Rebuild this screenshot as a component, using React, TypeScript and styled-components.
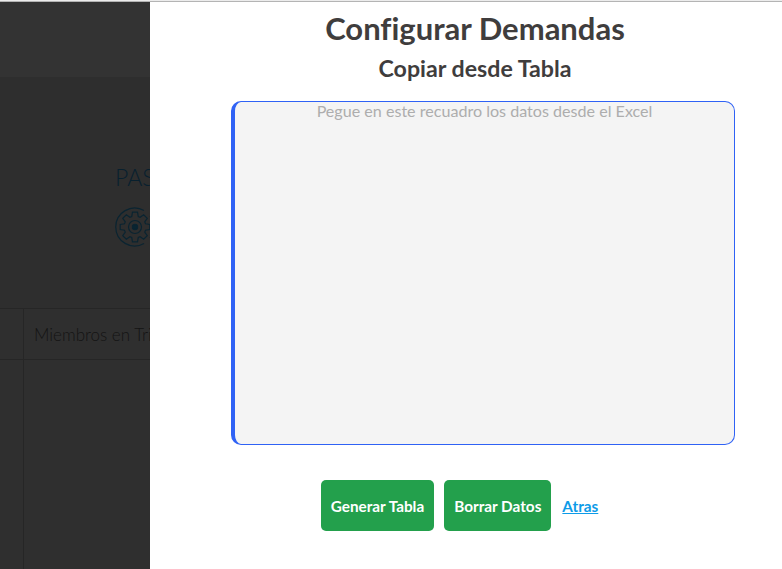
import React from "react";
import styled, { createGlobalStyle } from "styled-components";

const Global = createGlobalStyle`
  html, body { margin: 0; padding: 0; height: 100%; overflow: hidden; background: #2e2e2e; }
  body { font-family: "Lato", "Open Sans", sans-serif; font-variant-ligatures: none; }
  * { box-sizing: border-box; }
`;

const Page = styled.div`
  height: 569px;
  width: 782px;
  overflow: hidden;
  background: #2e2e2e;
`;

const TopLine = styled.div`
  height: 2px;
  background: #b4b4b4;
  border-top: 1px solid #ececec;
`;

const TopBand = styled.div`
  height: 75px;
  background: #333333;
`;

const StepArea = styled.div`
  height: 231px;
  padding: 87px 0 0 115px;
`;

const StepTitle = styled.div`
  font-size: 23px;
  font-weight: 300;
  line-height: 26px;
  color: #08202e;
`;

const StepIcon = styled.svg`
  display: block;
  margin-top: 17px;
  width: 40px;
  height: 40px;
`;

const Table = styled.div`
  display: grid;
  grid-template-columns: 23px 1fr;
  grid-template-rows: 51px 1fr;
  height: 261px;
  background: #2f2f2f;
  border-top: 1px solid #262626;
`;

const Cell = styled.div<{ $left?: boolean }>`
  display: flex;
  align-items: center;
  padding-left: 10px;
  font-size: 17px;
  font-weight: 300;
  color: #141414;
  white-space: nowrap;
  border-bottom: 1px solid #262626;
  border-left: ${(p) => (p.$left ? "1px solid #262626" : "none")};
`;

const BodyCell = styled.div<{ $left?: boolean }>`
  border-left: ${(p) => (p.$left ? "1px solid #262626" : "none")};
`;

const Modal = styled.div`
  position: fixed;
  top: 2px;
  left: 150px;
  right: 0;
  bottom: 0;
  padding-left: 18px;
  background: #ffffff;
  color: #3f3d3d;
  display: flex;
  flex-direction: column;
  align-items: center;
`;

const Title = styled.h1`
  margin: 6px 0 0;
  font-size: 31px;
  line-height: 40px;
  font-weight: 700;
  text-align: center;
`;

const Subtitle = styled.h2`
  margin: 5px 0 0;
  font-size: 23.2px;
  line-height: 30px;
  font-weight: 700;
  text-align: center;
`;

const PasteBox = styled.textarea`
  display: block;
  width: 504px;
  height: 344px;
  margin: 18px 0 0 16px;
  padding: 0;
  resize: none;
  outline: none;
  background: #f4f4f4;
  border: 1px solid #2f62f5;
  border-left: 4px solid #2f62f5;
  border-radius: 10px;
  font-family: inherit;
  font-size: 16.1px;
  line-height: 18px;
  text-align: center;
  &::placeholder { color: #adadad; opacity: 1; }
`;

const Actions = styled.div`
  display: flex;
  align-items: center;
  gap: 10px;
  margin-top: 35px;
  margin-left: -31px;
`;

const Button = styled.button`
  height: 51px;
  padding: 0 10px;
  border: none;
  border-radius: 5px;
  background: #23a04c;
  color: #ffffff;
  font-family: inherit;
  font-size: 15.3px;
  font-weight: 700;
`;

const BackLink = styled.a`
  margin-left: 1px;
  color: #0d9be8;
  font-size: 15.3px;
  font-weight: 700;
  text-decoration: underline;
`;

// cog outline, 8 teeth
const gearPath = () => {
  const cx = 20;
  const cy = 20;
  const pts: string[] = [];
  for (let i = 0; i < 8; i++) {
    const a = (i * Math.PI) / 4;
    const add = (r: number, off: number) => {
      const t = a + off;
      pts.push(`${(cx + r * Math.cos(t)).toFixed(2)} ${(cy + r * Math.sin(t)).toFixed(2)}`);
    };
    add(11, -0.3);
    add(15, -0.17);
    add(15, 0.17);
    add(11, 0.3);
  }
  return "M" + pts.join("L") + "Z";
};

const GearIcon = () => (
  <StepIcon viewBox="0 0 40 40" fill="none" stroke="#0a2431" strokeWidth="1.2">
    <path d="M29 3.4A19 19 0 1 0 29 36.6" />
    <path d="M35 9A19 19 0 0 1 35 31" />
    <path d={gearPath()} />
    <circle cx="20" cy="20" r="6.5" />
    <circle cx="20" cy="20" r="2.6" fill="#0a2431" />
  </StepIcon>
);

export default function App() {
  return (
    <>
      <Global />
      <Page>
        <TopLine />
        <TopBand />
        <StepArea>
          <StepTitle>PASO</StepTitle>
          <GearIcon />
        </StepArea>
        <Table>
          <Cell />
          <Cell $left>Miembros en Tribunal</Cell>
          <BodyCell />
          <BodyCell $left />
        </Table>
      </Page>
      <Modal>
        <Title>Configurar Demandas</Title>
        <Subtitle>Copiar desde Tabla</Subtitle>
        <PasteBox placeholder="Pegue en este recuadro los datos desde el Excel" />
        <Actions>
          <Button>Generar Tabla</Button>
          <Button>Borrar Datos</Button>
          <BackLink href="#">Atras</BackLink>
        </Actions>
      </Modal>
    </>
  );
}
